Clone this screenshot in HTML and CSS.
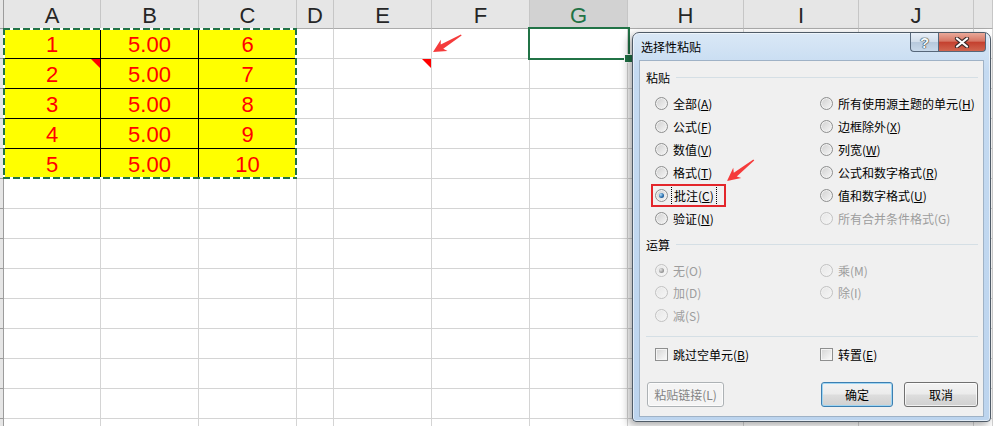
FILE: index.html
```html
<!DOCTYPE html>
<html lang="zh-CN">
<head>
  <meta charset="UTF-8" />
  <title>选择性粘贴</title>
  <link rel="stylesheet" href="styles.css">
</head>
<body>
  <div class="sheet" id="sheet"></div>
  <div class="marquee"></div>
  <div class="selection"></div>

  <div class="dialog">
    <div class="titlebar">
      <span class="title">选择性粘贴</span>
      <div class="caption">
        <span class="cap-help">?</span>
        <span class="cap-close">
          <svg width="16" height="11" viewBox="0 0 16 11">
            <path d="M3 1.5 L13 9.5 M13 1.5 L3 9.5" stroke="#3a2a28" stroke-width="4.2" stroke-linecap="round" />
            <path d="M3 1.5 L13 9.5 M13 1.5 L3 9.5" stroke="#fff" stroke-width="2.2" stroke-linecap="round" />
          </svg>
        </span>
      </div>
    </div>

    <div class="client">
      <div class="group">粘贴</div>
      <div class="options">
        <label class="opt"><i class="radio"></i><span>全部(<u>A</u>)</span></label>
        <label class="opt"><i class="radio"></i><span>所有使用源主题的单元(<u>H</u>)</span></label>
        <label class="opt"><i class="radio"></i><span>公式(<u>F</u>)</span></label>
        <label class="opt"><i class="radio"></i><span>边框除外(<u>X</u>)</span></label>
        <label class="opt"><i class="radio"></i><span>数值(<u>V</u>)</span></label>
        <label class="opt"><i class="radio"></i><span>列宽(<u>W</u>)</span></label>
        <label class="opt"><i class="radio"></i><span>格式(<u>T</u>)</span></label>
        <label class="opt"><i class="radio"></i><span>公式和数字格式(<u>R</u>)</span></label>
        <label class="opt marked"><i class="radio on"></i><span class="focus">批注(<u>C</u>)</span></label>
        <label class="opt"><i class="radio"></i><span>值和数字格式(<u>U</u>)</span></label>
        <label class="opt"><i class="radio"></i><span>验证(<u>N</u>)</span></label>
        <label class="opt off"><i class="radio"></i><span>所有合并条件格式(G)</span></label>
      </div>

      <div class="group second">运算</div>
      <div class="options ops">
        <label class="opt off"><i class="radio on"></i><span>无(O)</span></label>
        <label class="opt off"><i class="radio"></i><span>乘(M)</span></label>
        <label class="opt off"><i class="radio"></i><span>加(D)</span></label>
        <label class="opt off"><i class="radio"></i><span>除(I)</span></label>
        <label class="opt off"><i class="radio"></i><span>减(S)</span></label>
      </div>

      <div class="rule"></div>
      <div class="options checks">
        <label class="opt"><i class="check"></i><span>跳过空单元(<u>B</u>)</span></label>
        <label class="opt"><i class="check"></i><span>转置(<u>E</u>)</span></label>
      </div>

      <div class="buttons">
        <button class="btn link" disabled>粘贴链接(L)</button>
        <div class="btn-pair">
          <button class="btn ok">确定</button>
          <button class="btn cancel">取消</button>
        </div>
      </div>
    </div>
  </div>

  <!-- red annotation arrows -->
  <svg class="arrows" width="993" height="426">
    <polygon points="0,0 13,-6.5 10.5,-2.4 33,-0.7 33,0.7 10.5,2.4 13,6.5" fill="#f53b3b" transform="translate(433 52) rotate(-31)" />
    <polygon points="0,0 13,-6.5 10.5,-2.4 34,-0.7 34,0.7 10.5,2.4 13,6.5" fill="#f53b3b" transform="translate(727 181) rotate(-38)" />
  </svg>

  <script>
    const sheet = document.getElementById("sheet");
    const cols = ["A", "B", "C", "D", "E", "F", "G", "H", "I", "J", ""];
    const data = [
      ["1", "5.00", "6"],
      ["2", "5.00", "7"],
      ["3", "5.00", "8"],
      ["4", "5.00", "9"],
      ["5", "5.00", "10"]
    ];
    const notes = ["A2", "E2"]; // cells that carry a comment marker

    function addCell(className, text) {
      const cell = document.createElement("div");
      cell.className = "cell " + className;
      cell.innerText = text || "";
      sheet.appendChild(cell);
    }

    addCell("head edge");
    cols.forEach(c => addCell(c === "G" ? "head sel" : "head", c));

    for (let r = 1; r <= 14; r++) {
      addCell("edge");
      cols.forEach((c, i) => {
        let cls = "";
        let text = "";
        if (r <= data.length && i < 3) {
          cls = "fill";
          text = data[r - 1][i];
        }
        if (notes.includes(c + r)) cls += " note";
        addCell(cls, text);
      });
    }
  </script>
</body>
</html>
```

FILE: styles.css
```css
* { box-sizing: border-box; }
body {
  margin: 0;
  width: 993px;
  height: 426px;
  overflow: hidden;
  position: relative;
  background: #fff;
  font-family: "Liberation Sans", sans-serif;
}

/* spreadsheet */
.sheet {
  display: grid;
  grid-template-columns: 4px 97px 98px 98px 37px 98px 98px 98px 116px 115px 115px 1fr;
  grid-template-rows: 29px;
  grid-auto-rows: 30px;
  height: 426px;
  overflow: hidden;
}
.cell {
  position: relative;
  border-right: 1px solid #d4d4d4;
  border-bottom: 1px solid #d4d4d4;
  text-align: center;
  font-family: "Liberation Sans", sans-serif;
  font-size: 22px;
  line-height: 31px;
  color: #f00;
}
.head {
  background: #e6e6e6;
  border-right-color: #c6c6c6;
  border-bottom-color: #ababab;
  color: #262626;
  font-size: 22px;
  line-height: 32px;
}
.head.sel {
  background: #d2d2d2;
  color: #217346;
}
.edge {
  background: #e6e6e6;
  border-right-color: #9c9c9c;
  border-bottom-color: #9c9c9c;
}
.fill {
  background: #ff0;
  border-right-color: #000;
  border-bottom-color: #000;
}
.note::after {
  content: "";
  position: absolute;
  top: 0;
  right: 0;
  border-top: 9px solid #f00;
  border-left: 9px solid transparent;
}

/* copy marquee around A1:C5 */
.marquee {
  position: absolute;
  left: 3px;
  top: 28px;
  width: 294px;
  height: 151px;
  background:
    repeating-linear-gradient(90deg, #217346 0 7px, #fff 7px 10px) left top / 100% 2px no-repeat,
    repeating-linear-gradient(90deg, #217346 0 7px, #fff 7px 10px) left bottom / 100% 2px no-repeat,
    repeating-linear-gradient(180deg, #217346 0 7px, #fff 7px 10px) left top / 2px 100% no-repeat,
    repeating-linear-gradient(180deg, #217346 0 7px, #fff 7px 10px) right top / 2px 100% no-repeat;
}
.selection {
  position: absolute;
  left: 528px;
  top: 27px;
  width: 102px;
  height: 33px;
  border: 2px solid #217346;
}
.selection::after {
  content: "";
  position: absolute;
  right: -5px;
  bottom: -5px;
  width: 7px;
  height: 7px;
  background: #217346;
  border: 1px solid #fff;
}

/* dialog window */
.dialog {
  position: absolute;
  left: 632px;
  top: 32px;
  width: 359px;
  height: 390px;
  display: flex;
  flex-direction: column;
  border: 1px solid #505c68;
  border-radius: 7px 7px 4px 4px;
  background: linear-gradient(#dae8f6, #c4daf1 10%, #bcd4ee);
  box-shadow: -3px 3px 9px rgba(0, 0, 0, 0.35), inset 0 0 0 1px rgba(255, 255, 255, 0.55);
  font-family: "Noto Sans CJK SC", sans-serif;
  font-size: 12px;
  color: #000;
}
.titlebar {
  height: 27px;
  display: flex;
  justify-content: space-between;
  align-items: flex-start;
  padding-left: 8px;
}
.title { line-height: 27px; }
.caption {
  display: flex;
  margin-right: 4px;
}
.cap-help,
.cap-close {
  height: 19px;
  display: flex;
  align-items: center;
  justify-content: center;
  border: 1px solid #56677a;
  border-top: none;
}
.cap-help {
  width: 28px;
  border-right: none;
  border-radius: 0 0 0 4px;
  background: linear-gradient(#e8eff8, #d2deeb 48%, #b7c9dc 52%, #c8d9ea);
  font-family: "Liberation Sans", sans-serif;
  font-weight: bold;
  font-size: 15px;
  color: #f4f8fc;
  text-shadow: 0 0 1px #233, 0 0 1px #233, 0 0 1px #233;
}
.cap-close {
  width: 48px;
  border-radius: 0 0 4px 0;
  background: linear-gradient(#e9a999, #d67664 45%, #c4412f 52%, #d0654f);
}
.client {
  flex: 1;
  margin: 0 6px 4px 6px;
  padding: 0 5px 0 6px;
  border: 1px solid #9fb2c6;
  background: #f0f0f0;
}
.group {
  display: flex;
  align-items: center;
  gap: 6px;
  height: 18px;
  margin-top: 7px;
}
.group::after {
  content: "";
  flex: 1;
  border-top: 1px solid #d5dfe5;
}
.group.second { margin-top: 5px; }
.options {
  display: grid;
  grid-template-columns: 165px 1fr;
  grid-auto-rows: 23px;
  margin-top: 6px;
  padding-left: 9px;
}
.options.ops {
  grid-auto-rows: 22.5px;
}
.options.checks { margin-top: 6px; }
.opt {
  position: relative;
  justify-self: start;
  display: flex;
  align-items: center;
  gap: 5px;
  white-space: nowrap;
}
.opt u { text-underline-offset: 1px; }
.opt.off { color: #9d9d9d; }
.opt.marked::before {
  content: "";
  position: absolute;
  left: -4px;
  right: -11px;
  top: 0;
  bottom: 0;
  border: 2px solid #e3262b;
}
.focus {
  outline: 1px dotted #000;
  outline-offset: 1px;
  padding: 0 1px;
}
.radio {
  position: relative;
  flex: none;
  width: 13px;
  height: 13px;
  border-radius: 50%;
  border: 1px solid #8e8f8f;
  background: linear-gradient(135deg, #cfcfcf, #f7f7f7);
  box-shadow: inset 0 0 0 1px #f2f2f2;
}
.radio.on::after {
  content: "";
  position: absolute;
  left: 3px;
  top: 3px;
  width: 5px;
  height: 5px;
  border-radius: 50%;
  background: radial-gradient(circle at 35% 35%, #b5e0fb, #2a6fae 55%, #163f6c);
}
.off .radio {
  border-color: #c2c2c2;
  background: linear-gradient(135deg, #e6e6e6, #f6f6f6);
}
.off .radio.on::after {
  background: radial-gradient(circle at 35% 35%, #e6e6e6, #9a9a9a 60%, #7b7b7b);
}
.check {
  flex: none;
  width: 13px;
  height: 13px;
  border: 1px solid #8e8f8f;
  background: linear-gradient(135deg, #d4d4d4, #fbfbfb);
  box-shadow: inset 0 0 0 1px #f4f4f4;
}
.rule {
  margin-top: 9px;
  border-top: 1px solid #d5dfe5;
}
.buttons {
  display: flex;
  justify-content: space-between;
  margin-top: 16px;
  padding-left: 1px;
}
.btn-pair {
  display: flex;
  gap: 11px;
}
.btn {
  height: 25px;
  padding: 0;
  font-family: "Noto Sans CJK SC", sans-serif;
  font-size: 12px;
  color: #000;
  border: 1px solid #707070;
  border-radius: 3px;
  background: linear-gradient(#f3f3f3, #ebebeb 48%, #dddddd 52%, #d0d0d0);
  box-shadow: inset 0 0 0 1px rgba(255, 255, 255, 0.7);
}
.btn.link {
  width: 77px;
  color: #838383;
  border-color: #adb2b5;
  background: #f4f4f4;
}
.btn.ok {
  width: 72px;
  border-color: #3c7fb1;
  box-shadow: inset 0 0 0 1px #9fd5f2;
}
.btn.cancel { width: 74px; }

.arrows {
  position: absolute;
  left: 0;
  top: 0;
  pointer-events: none;
}
```
